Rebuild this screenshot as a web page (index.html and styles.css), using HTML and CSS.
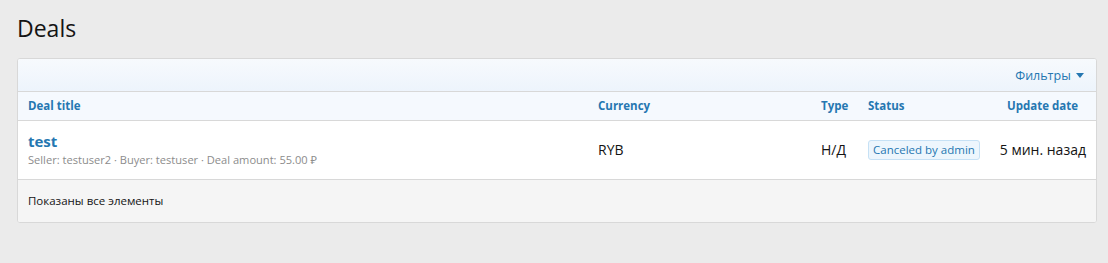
FILE: index.html
```html
<!DOCTYPE html>
<html lang="en">
<head>
  <meta charset="UTF-8">
  <title>Deals</title>
  <meta name="viewport" content="width=device-width, initial-scale=1.0">
  <link rel="stylesheet" href="styles.css">
</head>
<body>

  <h1 class="pageTitle">Deals</h1>

  <div class="block">
    <div class="filterBar">
      <a class="filterLink" href="#">Фильтры <span class="caret"></span></a>
    </div>

    <table class="dataList">
      <thead>
        <tr class="headRow">
          <th class="colTitle">Deal title</th>
          <th class="colCurrency">Currency</th>
          <th class="colType">Type</th>
          <th class="colStatus">Status</th>
          <th class="colDate">Update date</th>
        </tr>
      </thead>
      <tbody>
        <tr class="dataRow">
          <td class="colTitle">
            <a class="dealLink" href="#">test</a>
            <div class="dealMeta">Seller: testuser2 · Buyer: testuser · Deal amount: 55.00 ₽</div>
          </td>
          <td class="colCurrency">RYB</td>
          <td class="colType">Н/Д</td>
          <td class="colStatus"><span class="badge">Canceled by admin</span></td>
          <td class="colDate">5 мин. назад</td>
        </tr>
      </tbody>
    </table>

    <div class="blockFooter">Показаны все элементы</div>
  </div>

</body>
</html>
```

FILE: styles.css
```css
* {
  box-sizing: border-box;
}

body {
  margin: 0;
  padding: 10px 11px 0 17px;
  background: #ebebeb;
  color: #141414;
  font-family: 'Open Sans', 'Noto Sans', sans-serif;
}

.pageTitle {
  margin: 0;
  padding: 3px 0 0;
  height: 48px;
  font-size: 23px;
  font-weight: 400;
  line-height: 30px;
  color: #141414;
}

.block {
  background: #fff;
  border: 1px solid #d8d8d8;
  border-radius: 3px;
  overflow: hidden;
}

.filterBar {
  display: flex;
  justify-content: flex-end;
  align-items: center;
  height: 33px;
  padding: 0 12px;
  background: linear-gradient(to bottom, #f7fafd, #edf4fc);
  border-bottom: 1px solid #d8d8d8;
}

.filterLink {
  font-size: 12.5px;
  color: #2577b1;
  text-decoration: none;
}

.caret {
  display: inline-block;
  width: 0;
  height: 0;
  margin-left: 2px;
  vertical-align: 2px;
  border-left: 4px solid transparent;
  border-right: 4px solid transparent;
  border-top: 5px solid #2577b1;
}

.dataList {
  width: 100%;
  border-collapse: collapse;
  table-layout: fixed;
}

.headRow th {
  height: 28px;
  padding: 0 10px;
  background: #f5f9fe;
  border-bottom: 1px solid #d8d8d8;
  font-size: 11.5px;
  font-weight: 700;
  color: #2577b1;
  text-align: left;
}

.dataRow td {
  height: 59px;
  padding: 0 10px;
  font-size: 14px;
  color: #141414;
  vertical-align: middle;
  border-bottom: 1px solid #d8d8d8;
}

.colTitle { width: 570px; }
.colCurrency { width: 223px; }
.colType { width: 47px; }
.colStatus { width: 130px; }

.headRow .colDate {
  text-align: right;
  padding-right: 18px;
}

.dataRow .colDate {
  text-align: right;
  white-space: nowrap;
}

.dealLink {
  display: block;
  font-size: 15px;
  font-weight: 700;
  color: #2577b1;
  text-decoration: none;
  line-height: 19px;
}

.dealMeta {
  margin-top: 1px;
  font-size: 11.1px;
  color: #8c8c8c;
}

.badge {
  display: inline-block;
  padding: 0 4px;
  font-size: 11.5px;
  line-height: 18px;
  color: #2577b1;
  background: #edf6fd;
  border: 1px solid #c6e1f5;
  border-radius: 3px;
  white-space: nowrap;
}

.blockFooter {
  height: 42px;
  padding: 0 10px;
  display: flex;
  align-items: center;
  background: #f5f5f5;
  font-size: 11.5px;
  color: #141414;
}
```
